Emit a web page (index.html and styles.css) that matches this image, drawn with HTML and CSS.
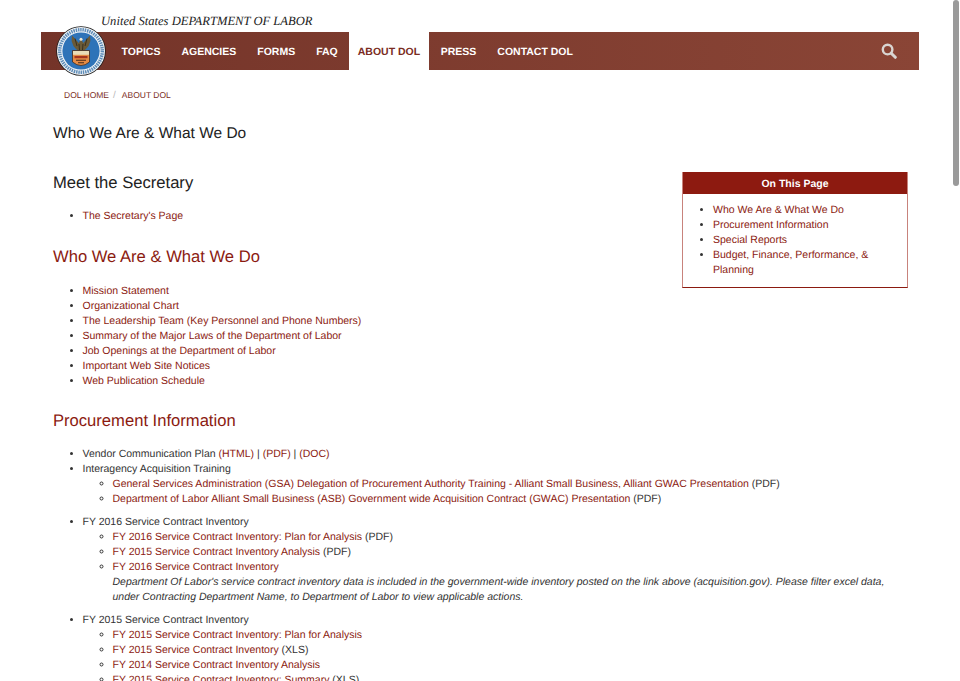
FILE: index.html
```html
<!DOCTYPE html>
<html lang="en">
<head>
<meta charset="utf-8">
<title>About DOL</title>
<link rel="stylesheet" href="styles.css">
</head>
<body>
<div class="scroll-thumb"></div>
<header class="site-header">
  <div class="agency-line">United States <span class="agency-upper">DEPARTMENT OF LABOR</span></div>
  <nav class="navbar">
    <svg class="seal" viewBox="0 0 50 50" aria-hidden="true">
      <circle cx="25" cy="25" r="24.8" fill="#1c1c1c"/>
      <circle cx="25" cy="25" r="24" fill="#f2f5f8"/>
      <circle cx="25" cy="25" r="21.3" fill="none" stroke="#5f8db8" stroke-width="3.4" stroke-dasharray="1.5 0.8"/>
      <circle cx="25" cy="25" r="18.6" fill="#2e73b8"/>
      <path d="M25 12.5 L22.8 17 L16 9.5 L15.6 15 L17.4 20 L20 23 L22 24.5 H28 L30 23 L32.6 20 L34.4 15 L34 9.5 L27.2 17 Z" fill="#6a5a38"/>
      <path d="M19 12.5 L21 20 M31 12.5 L29 20 M23 18 L23.5 24 M27 18 L26.5 24" stroke="#2a2418" stroke-width="0.8"/>
      <circle cx="25" cy="13.2" r="1.5" fill="#efe8d2"/>
      <path d="M16.5 24.5 H33.5 V36 Q25 43 16.5 36 Z" fill="#e58b45" stroke="#33241a" stroke-width="0.7"/>
      <rect x="17" y="25" width="16" height="3.8" fill="#e9dcb8"/>
      <rect x="18.5" y="30" width="13" height="2.2" fill="#a5341f"/>
      <path d="M20 34.2 H30 M22 36.8 H28" stroke="#4a2d1a" stroke-width="1.1"/>
    </svg>
    <ul class="nav-list">
      <li><a class="nav-link" href="#">TOPICS</a></li>
      <li><a class="nav-link" href="#">AGENCIES</a></li>
      <li><a class="nav-link" href="#">FORMS</a></li>
      <li><a class="nav-link" href="#">FAQ</a></li>
      <li><a class="nav-link active" href="#">ABOUT DOL</a></li>
      <li><a class="nav-link" href="#">PRESS</a></li>
      <li><a class="nav-link" href="#">CONTACT DOL</a></li>
    </ul>
    <svg class="search-icon" viewBox="0 0 16 16" aria-hidden="true">
      <circle cx="6.6" cy="6.6" r="4.8" fill="none" stroke="#d9d5d2" stroke-width="2.4"/>
      <path d="M10.2 10.2 L14.3 14.3" stroke="#d9d5d2" stroke-width="3" stroke-linecap="round"/>
    </svg>
  </nav>
</header>
<div class="breadcrumb"><a href="#">DOL HOME</a><span class="sep">/</span><a href="#">ABOUT DOL</a></div>
<main class="content">
  <h1 class="page-title">Who We Are &amp; What We Do</h1>
  <aside class="on-this-page">
    <div class="otp-head">On This Page</div>
    <ul class="otp-list">
      <li><a href="#">Who We Are &amp; What We Do</a></li>
      <li><a href="#">Procurement Information</a></li>
      <li><a href="#">Special Reports</a></li>
      <li><a href="#">Budget, Finance, Performance, &amp; Planning</a></li>
    </ul>
  </aside>
  <h2 class="sec-title dark first">Meet the Secretary</h2>
  <ul class="list">
    <li><a href="#">The Secretary's Page</a></li>
  </ul>
  <h2 class="sec-title who">Who We Are &amp; What We Do</h2>
  <ul class="list">
    <li><a href="#">Mission Statement</a></li>
    <li><a href="#">Organizational Chart</a></li>
    <li><a href="#">The Leadership Team (Key Personnel and Phone Numbers)</a></li>
    <li><a href="#">Summary of the Major Laws of the Department of Labor</a></li>
    <li><a href="#">Job Openings at the Department of Labor</a></li>
    <li><a href="#">Important Web Site Notices</a></li>
    <li><a href="#">Web Publication Schedule</a></li>
  </ul>
  <h2 class="sec-title procurement">Procurement Information</h2>
  <ul class="list">
    <li>Vendor Communication Plan <a href="#">(HTML)</a> | <a href="#">(PDF)</a> | <a href="#">(DOC)</a></li>
    <li>Interagency Acquisition Training
      <ul class="sublist">
        <li><a href="#">General Services Administration (GSA) Delegation of Procurement Authority Training - Alliant Small Business, Alliant GWAC Presentation</a> (PDF)</li>
        <li><a href="#">Department of Labor Alliant Small Business (ASB) Government wide Acquisition Contract (GWAC) Presentation</a> (PDF)</li>
      </ul>
    </li>
    <li>FY 2016 Service Contract Inventory
      <ul class="sublist">
        <li><a href="#">FY 2016 Service Contract Inventory: Plan for Analysis</a> (PDF)</li>
        <li><a href="#">FY 2015 Service Contract Inventory Analysis</a> (PDF)</li>
        <li><a href="#">FY 2016 Service Contract Inventory</a><br><em>Department Of Labor's service contract inventory data is included in the government-wide inventory posted on the link above (acquisition.gov). Please filter excel data, under Contracting Department Name, to Department of Labor to view applicable actions.</em></li>
      </ul>
    </li>
    <li>FY 2015 Service Contract Inventory
      <ul class="sublist">
        <li><a href="#">FY 2015 Service Contract Inventory: Plan for Analysis</a></li>
        <li><a href="#">FY 2015 Service Contract Inventory</a> (XLS)</li>
        <li><a href="#">FY 2014 Service Contract Inventory Analysis</a></li>
        <li><a href="#">FY 2015 Service Contract Inventory: Summary</a> (XLS)</li>
      </ul>
    </li>
  </ul>
</main>
</body>
</html>
```
FILE: styles.css
```css
html, body { margin: 0; padding: 0; height: 681px; overflow: hidden; background: #fff; }
body { font-family: "Liberation Sans", Arial, sans-serif; font-size: 10.5px; line-height: 15px; color: #333; text-rendering: geometricPrecision; }
a { color: #8b1a10; text-decoration: none; }

.scroll-thumb { position: absolute; top: 0; right: 1px; width: 6px; height: 186px; background: #9a9a9a; border-radius: 3px; }

.site-header { padding: 14px 41px 0; width: 878px; }
.agency-line { font-family: "Liberation Serif", "Times New Roman", serif; font-style: italic; font-size: 12.6px; line-height: 15px; color: #222; padding-left: 60px; height: 18px; }
.navbar { position: relative; display: flex; align-items: stretch; height: 38px; background: linear-gradient(90deg, #743429, #8a4536); padding-left: 70px; }
.seal { position: absolute; left: 15px; top: -6px; width: 50px; height: 50px; }
.nav-list { display: flex; list-style: none; margin: 0; padding: 0; }
.nav-link { display: block; height: 38px; padding: 0 10.5px; font-weight: bold; font-size: 10.5px; line-height: 41px; color: #fff; }
.nav-link.active { background: #fff; color: #7a2c22; padding: 0 9px; margin: 0 1px 0 0.5px; }
.search-icon { position: absolute; right: 22px; top: 11px; width: 16px; height: 16px; }

.breadcrumb { padding: 18px 0 0 64px; font-size: 8.5px; line-height: 15px; height: 23px; }
.breadcrumb a { color: #7a2c22; }
.sep { color: #bbb; margin: 0 6px 0 4px; font-size: 10px; }

.content { padding: 0 52px 0 53px; }
.page-title { font-weight: normal; font-size: 15.5px; line-height: 20px; margin: 13px 0 0; color: #222; }
.on-this-page { float: right; width: 224px; margin: 28px 0 0 20px; border: 1px solid #c8837c; border-top: 0; border-bottom-color: #8b1a10; }
.otp-head { background: #8d1a10; color: #fff; font-weight: bold; text-align: center; line-height: 25px; height: 22px; }
.otp-list { margin: 9px 0 9px; padding: 0 30px; }

.sec-title { font-weight: normal; font-size: 16.6px; line-height: 20px; margin: 23px 0 16px; color: #8b1a10; }
.sec-title.dark { color: #222; }
.sec-title.first { margin-top: 29px; }
.sec-title.who { margin-bottom: 17px; }
.sec-title.procurement { margin-top: 22px; }
.list { margin: 0; padding-left: 29.5px; }
.list > li { margin-bottom: 8px; }
.list > li:not(:has(ul)) { margin-bottom: 0; }
.sublist { list-style: circle; margin: 0; padding-left: 30px; }
```
